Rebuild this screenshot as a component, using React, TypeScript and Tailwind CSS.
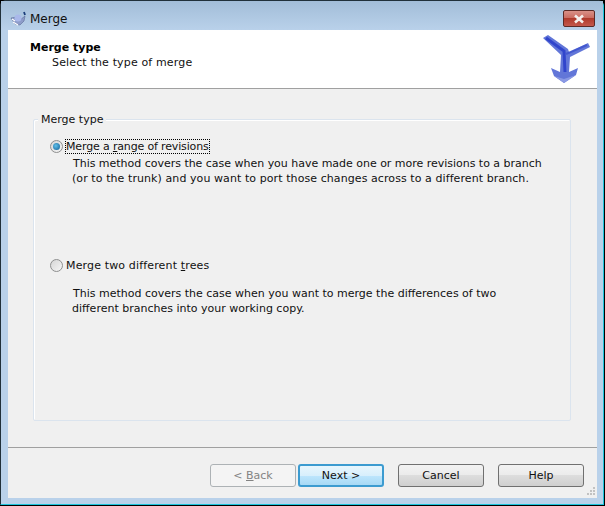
import React from 'react';

const font = { fontFamily: '"DejaVu Sans", sans-serif' };

const TitleIcon = () => (
  <svg width="18" height="16" viewBox="0 0 18 16">
    <path d="M1 7 L7 6 L10 9 L15 5 L14 10 L10 14 L5 13 Z" fill="#8d9cc9" stroke="#5a6a96" strokeWidth="0.6" />
    <circle cx="8" cy="7" r="3.5" fill="#a9b8ea" />
    <path d="M3 11 L8 14 M2 8 L5 10" stroke="#ffffff" strokeWidth="1.2" />
    <path d="M14 1 L15 4" stroke="#1b3e7a" strokeWidth="1.8" />
  </svg>
);

const MergeLogo = () => (
  <svg width="50" height="52" viewBox="0 0 50 52">
    <path d="M2 4 L7 1 L27 15 L28 18 L47 9 L49 13 L29 23 L28 38 L37 34 L35 41 L23 49 L13 42 L10 34 L19 38 L20 21 Z" fill="#6276d8" />
    <path d="M5 4 L23 17 L24 38" stroke="#2236c8" strokeWidth="3" fill="none" opacity="0.75" />
    <path d="M25 20 L46 11" stroke="#2f45c9" strokeWidth="2" fill="none" opacity="0.6" />
    <path d="M13 42 L23 49 L35 41 L23 45 Z" fill="#8a99e4" />
  </svg>
);

const Radio = ({ checked }: { checked?: boolean }) => (
  <span className="w-[13px] h-[13px] rounded-full border border-[#8e8f8f] bg-gradient-to-br from-[#d6d6d6] to-[#f6f6f6] flex items-center justify-center shrink-0">
    {checked && <span className="w-[7px] h-[7px] rounded-full bg-[radial-gradient(circle_at_40%_40%,#5fc0ea,#0f5c93)]" />}
  </span>
);

const WizardButton = ({ children, variant }: { children: React.ReactNode; variant?: 'primary' | 'disabled' }) => {
  let cls = 'border-[#707070] bg-[linear-gradient(#f2f2f2_0%,#ebebeb_50%,#dddddd_50%,#cfcfcf_100%)] text-[#111]';
  if (variant === 'primary') cls = 'border-[#3c9bd0] border-2 bg-[linear-gradient(#e8f6fd_0%,#d8effc_50%,#bee6fd_50%,#a7d9f5_100%)] text-[#111]';
  if (variant === 'disabled') cls = 'border-[#adb2b5] bg-[#f4f4f4] text-[#838383]';
  return (
    <div className={`w-[86px] h-[23px] border rounded-[3px] flex items-center justify-center text-[11px] ${cls}`}>
      {children}
    </div>
  );
};

export default function App() {
  return (
    <div style={font} className="w-[605px] h-[506px] bg-black overflow-hidden text-[11px] leading-[15px] text-[#111] pr-px pb-px">
      <div className="w-full h-full flex flex-col border-l border-t border-[#20303a] rounded-t-[6px] bg-[#b9d1ea] border-b border-b-[#1cc4dc] border-r border-r-[#1cc4dc]">
        {/* titlebar */}
        <div className="h-[29px] shrink-0 flex items-start justify-between bg-[linear-gradient(#a2bdd8,#b9d1ea)]">
          <div className="flex items-center gap-[2px] pl-[9px] pt-[10px] text-[12px] text-[#111]">
            <TitleIcon />
            <span>Merge</span>
          </div>
          <div className="mr-[8px] mt-[9px] w-[32px] h-[17px] rounded-[2px] border border-[#5c2a26] bg-[linear-gradient(#d99087_0%,#c9695e_50%,#b03a2c_50%,#c4584c_100%)] flex items-center justify-center">
            <svg width="14" height="10" viewBox="0 0 14 10">
              <path d="M3 1.5 L11 8.5 M11 1.5 L3 8.5" stroke="#f4f0ee" strokeWidth="2.6" />
            </svg>
          </div>
        </div>
        {/* dialog client */}
        <div className="flex-1 min-h-0 ml-[7px] mr-[6px] mb-[6px] bg-[#f0f0f0] flex flex-col">
          <div className="h-[59px] shrink-0 bg-white border-b border-[#a0a0a0] flex justify-between">
            <div className="pl-[22px] pt-[10px]">
              <div className="font-bold leading-[15px] text-black">Merge type</div>
              <div className="pl-[22px] leading-[16px] tracking-[0.15px]">Select the type of merge</div>
            </div>
            <div className="pt-[4px] pr-[6px]">
              <MergeLogo />
            </div>
          </div>
          <div className="flex-1 min-h-0 pl-[25px] pr-[26px] pt-[30px] pb-[26px]">
            <div className="h-full border border-[#dbe4ee] rounded-[2px] shadow-[inset_1px_1px_0_#ffffff] relative pl-[16px] pr-[20px] pt-[18px] flex flex-col">
              <span className="absolute left-[4px] -top-[8px] bg-[#f0f0f0] px-[3px] leading-[16px]">Merge type</span>
              <div className="flex items-center gap-[2px] h-[17px]">
                <Radio checked />
                <span className="border border-dotted border-black leading-[13px] h-[15px] tracking-[-0.15px]">
                  Merge a <span className="underline">r</span>ange of revisions
                </span>
              </div>
              <p className="pl-[23px] mt-px leading-[15px] whitespace-nowrap">
                <span className="tracking-[-0.02px]">This method covers the case when you have made one or more revisions to a branch</span>
                <br />
                <span className="-ml-px tracking-[0.08px]">(or to the trunk) and you want to port those changes across to a different branch.</span>
              </p>
              <div className="flex items-center gap-[3px] h-[17px] mt-[71px]">
                <Radio />
                <span className="tracking-[0.15px]">
                  Merge two different <span className="underline">t</span>rees
                </span>
              </div>
              <p className="pl-[23px] mt-[12px] leading-[15px] whitespace-nowrap">
                This method covers the case when you want to merge the differences of two
                <br />
                <span className="-ml-px">different branches into your working copy.</span>
              </p>
            </div>
          </div>
          <div className="h-[51px] shrink-0 border-t border-[#a0a0a0] relative flex items-start justify-end pt-[16px] pr-[13px]">
            <div className="flex">
              <WizardButton variant="disabled">
                &lt;&nbsp;<span className="underline">B</span>ack
              </WizardButton>
              <div className="ml-[2px]">
                <WizardButton variant="primary">Next &gt;</WizardButton>
              </div>
              <div className="ml-[14px]">
                <WizardButton>Cancel</WizardButton>
              </div>
              <div className="ml-[14px]">
                <WizardButton>Help</WizardButton>
              </div>
            </div>
            <svg className="absolute right-[2px] bottom-[2px]" width="10" height="10" viewBox="0 0 10 10">
              <path d="M8 1h2v2H8zM5 4h2v2H5zM8 4h2v2H8zM2 7h2v2H2zM5 7h2v2H5zM8 7h2v2H8z" fill="#c2c2c2" />
            </svg>
          </div>
        </div>
      </div>
    </div>
  );
}
